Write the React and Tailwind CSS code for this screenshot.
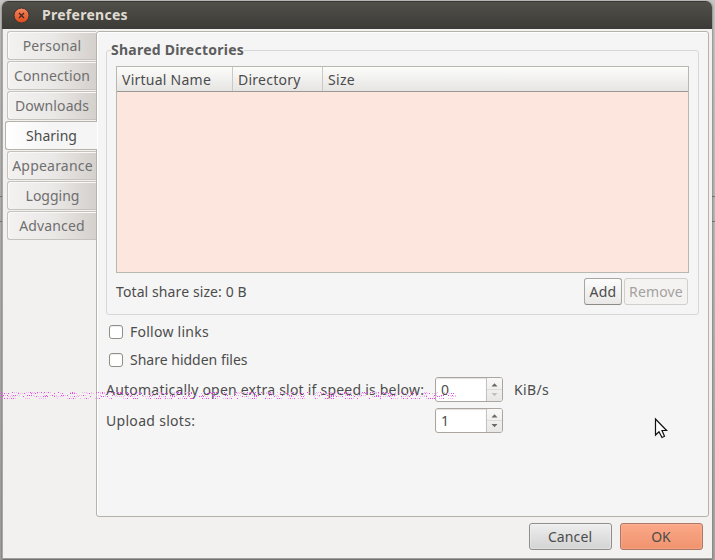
const tabs = [
  ["Personal", "tracking-[0.15px]"],
  ["Connection", "tracking-[0.1px]"],
  ["Downloads", "tracking-[0.1px]"],
  ["Sharing", "tracking-[0px]"],
  ["Appearance", "tracking-[0.2px] pl-px"],
  ["Logging", "tracking-[0px] pl-px"],
  ["Advanced", "tracking-[0.15px]"],
];

function Tab({ label, spacing, active }) {
  return active ? (
    <div className="mb-px flex h-[29px] items-center justify-center rounded-l-[3px] border border-r-0 border-[#b5b2ac] bg-gradient-to-r from-white to-[#f5f5f5] to-50% text-[#4c4c4c]">
      <span className={spacing}>{label}</span>
    </div>
  ) : (
    <div className="mr-px mb-px ml-[2px] flex h-[29px] items-center justify-center rounded-l-[3px] border border-r-0 border-[#c5c2be] bg-gradient-to-r from-[#f3f2f1] via-[#ebe9e7] to-[#d4d0cc] text-[#6f6f6f] shadow-[inset_1px_1px_0_#faf9f8]">
      <span className={spacing}>{label}</span>
    </div>
  );
}

function SpinBox({ value, atMinimum }) {
  return (
    <div className="flex h-[25px] w-[68px] overflow-hidden rounded-[3px] border border-[#aaa69f] bg-white">
      <div className="flex w-[51px] items-center border-r border-[#c5c1bb] pl-[5px] shadow-[inset_0_1px_1px_#e4e2df]">{value}</div>
      <svg className="h-[23px] w-[15px] bg-gradient-to-b from-[#f9f8f8] to-[#e9e7e5]" viewBox="0 0 15 23">
        <path d="M0 11.5H15" stroke="#dedbd8" />
        <path d="M4.5 8.5L7.5 5.2L10.5 8.5Z" fill="#6b6762" />
        <path d="M4.5 15L7.5 18.3L10.5 15Z" fill={atMinimum ? "#c1beba" : "#6b6762"} />
      </svg>
    </div>
  );
}

function CheckRow({ label, spacing }) {
  return (
    <div className="flex h-7 items-center pl-[3px]">
      <span className="mr-[7px] h-[14px] w-[14px] rounded-[3px] border border-[#918d88] bg-white shadow-[inset_0_1px_1px_#eeeeee]" />
      <span className={spacing}>{label}</span>
    </div>
  );
}

/* Scattered noise dots; the pattern is seeded so it is stable between renders. */
function NoiseLine() {
  const dots = [];
  let seed = 17;
  const next = () => {
    seed = (seed * 16807) % 2147483647;
    return seed / 2147483647;
  };
  [1, 2, 4, 5, 7].forEach((row, index) => {
    let x = 1 + (index % 2);
    while (x < 456) {
      const run = 1 + Math.floor(next() * 5);
      for (let i = 0; i < run && x < 456; i++) {
        dots.push([x, row, next() < 0.5]);
        x += 2;
      }
      x += 1 + Math.floor(next() * 10);
    }
  });
  return (
    <svg className="pointer-events-none absolute top-[391px] left-0 z-20 h-2 w-[460px]" viewBox="0 0 460 8" shapeRendering="crispEdges">
      {dots.map(([x, y, strong]) => (
        <rect key={`${x}-${y}`} x={x} y={y} width="1" height="1" fill={strong ? "#ed45ec" : "#efb6ee"} />
      ))}
    </svg>
  );
}

export default function App() {
  return (
    <div className="relative h-[560px] w-[715px] overflow-hidden bg-gradient-to-b from-[#c6c6c4] to-[#a7a7a5] pt-px pl-[2px] font-['Noto_Sans',sans-serif] text-[14px] leading-[20px] text-[#4c4c4c]">
      <div className="absolute top-[196px] left-0 h-[26px] w-full border-y border-[#77777a]" />
      <div className="relative h-[558px] w-[710px] overflow-hidden rounded-t-[6px] border-b border-[#a09e9b] bg-[#f2f1f0] shadow-[0_1px_3px_#555555]">
        <header className="flex h-7 items-center border-t border-[#3a3935] bg-gradient-to-b from-[#504f48] to-[#3c3b37] pl-[11px]">
          <svg className="h-[17px] w-[17px]" viewBox="0 0 17 17">
            <defs>
              <linearGradient id="close" x2="0" y2="1">
                <stop stopColor="#f58963" />
                <stop offset="1" stopColor="#dc4919" />
              </linearGradient>
            </defs>
            <circle cx="8.5" cy="8.5" r="7.5" fill="url(#close)" stroke="#383631" />
            <path d="M6 6L11 11M11 6L6 11" stroke="#46291e" strokeWidth="1.4" />
          </svg>
          <span className="ml-3 pb-[2px] text-[14px] font-bold tracking-[0.27px] text-[#dfdbd2]">Preferences</span>
        </header>

        <div className="flex h-[488px] border-l border-[#aaa8a5] pt-[2px] pl-[2px]">
          <nav className="relative z-10 -mr-px w-[92px] shrink-0">
            {tabs.map(([label, spacing]) => (
              <Tab key={label} label={label} spacing={spacing} active={label === "Sharing"} />
            ))}
          </nav>
          <main className="h-[486px] w-[613px] shrink-0 rounded-[3px] border border-[#b5b2ac] bg-[#f5f5f5] px-[9px] pt-[9px] shadow-[inset_1px_1px_0_#ffffff]">
            <fieldset className="h-[274px] w-[592px] rounded-[3px] border border-[#d7d7d7] px-[9px]">
              <legend className="-ml-[5px] h-[18px] leading-[18px] font-bold tracking-[0.24px] text-[#5d5d5d]">Shared Directories</legend>
              <div className="mt-[7px] h-[207px] w-[573px] border border-[#b9b8b0] bg-[#fde6de]">
                <div className="flex h-[25px] border-b border-[#9b9994] bg-gradient-to-b from-[#fcfcfb] to-[#e6e5e3]">
                  <div className="flex w-[116px] items-center border-r border-[#ccc9c5] pt-[2px] pl-[5px]"><span className="tracking-[0.25px]">Virtual Name</span></div>
                  <div className="flex w-[90px] items-center border-r border-[#ccc9c5] pt-[2px] pl-[5px]"><span className="tracking-[0.25px]">Directory</span></div>
                  <div className="flex items-center pt-[2px] pl-[5px]"><span className="tracking-[0.3px]">Size</span></div>
                </div>
              </div>
              <div className="mt-[5px] flex h-[27px] w-[572px] items-center">
                <span className="tracking-[0.1px]">Total share size: 0 B</span>
                <button className="ml-auto h-[27px] w-[38px] rounded-[3px] border border-[#a9a6a1] border-b-[#8d8a86] bg-gradient-to-b from-[#fcfcfc] to-[#e9e8e7] tracking-[0.3px]">Add</button>
                <button className="ml-[2px] h-[27px] w-[64px] rounded-[3px] border border-[#d1cfcc] bg-[#f4f3f2] tracking-[0.15px] text-[#a3a19e]">Remove</button>
              </div>
            </fieldset>
            <div className="mt-[3px]">
              <CheckRow label="Follow links" spacing="tracking-[0.25px]" />
              <CheckRow label="Share hidden files" spacing="tracking-[0px]" />
            </div>
            <div className="mt-[3px] flex h-[25px] items-center">
              <span className="w-[329px] whitespace-nowrap tracking-[0.22px]">Automatically open extra slot if speed is below:</span>
              <SpinBox value="0" atMinimum />
              <span className="ml-[11px] tracking-[0.35px]">KiB/s</span>
            </div>
            <div className="mt-[6px] flex h-[25px] items-center">
              <span className="w-[329px] tracking-[0.3px]">Upload slots:</span>
              <SpinBox value="1" />
            </div>
          </main>
        </div>

        <footer className="flex h-[41px] justify-end gap-2 border-l border-[#aaa8a5] pt-[6px] pr-[9px]">
          <button className="h-[27px] w-[83px] rounded-[3px] border border-[#8e8e8b] bg-gradient-to-b from-[#eeeeee] to-[#d3d3d3] pr-px tracking-[0.1px] shadow-[inset_0_0_2px_#ffffff]">Cancel</button>
          <button className="h-[27px] w-[83px] rounded-[3px] border border-[#ad7767] bg-gradient-to-b from-[#fba888] to-[#f0936e] pr-px shadow-[inset_0_0_2px_#ffc2aa]">OK</button>
        </footer>
      </div>
      <NoiseLine />
      <svg className="absolute top-[417px] left-[654px] z-20 h-[22px] w-[15px]" viewBox="0 0 15 22">
        <path d="M1.5 2V18L5 14.7L8 20.5L10.5 19.2L8 13.5H12.6Z" fill="#ffffff" stroke="#111111" strokeWidth="1.2" />
      </svg>
    </div>
  );
}
